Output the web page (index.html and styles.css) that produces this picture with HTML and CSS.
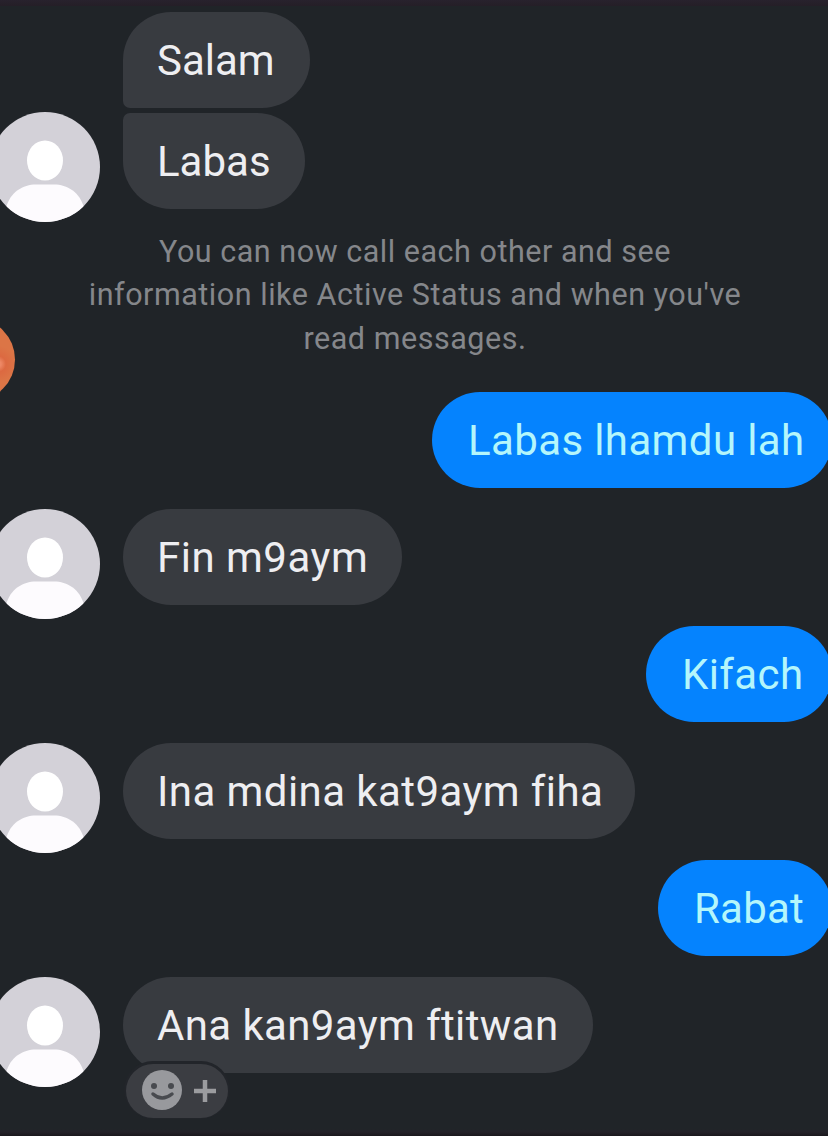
FILE: index.html
```html
<!DOCTYPE html>
<html lang="en">
<head>
<meta charset="utf-8">
<title>Chat</title>
<link rel="stylesheet" href="styles.css">
</head>
<body>
<svg class="defs" aria-hidden="true">
  <defs>
    <clipPath id="round"><circle cx="55" cy="55" r="55"/></clipPath>
    <symbol id="person" viewBox="0 0 110 110">
      <g clip-path="url(#round)">
        <rect width="110" height="110" fill="#d3d1d8"/>
        <ellipse cx="55" cy="48.5" rx="18" ry="20" fill="#fff"/>
        <path d="M16 96C20 80 33 72.500 46 72.500H64C77 72.500 90 80 94 96V110H16Z" fill="#fdfbfe"/>
      </g>
    </symbol>
  </defs>
</svg>
<main class="chat">
  <div class="head-marker"></div>
  <div class="row first"><div class="bubble group-top w-salam"><span>Salam</span></div></div>
  <div class="row labas"><svg class="avatar"><use href="#person"/></svg><div class="bubble group-end w-labas"><span>Labas</span></div></div>
  <p class="note">You can now call each other and see<br>information like Active Status and when you've<br>read messages.</p>
  <div class="row sent reply"><div class="bubble blue w-lah"><span>Labas lhamdu lah</span></div></div>
  <div class="row received"><svg class="avatar"><use href="#person"/></svg><div class="bubble w-fin"><span>Fin m9aym</span></div></div>
  <div class="row sent"><div class="bubble blue w-kifach"><span>Kifach</span></div></div>
  <div class="row received"><svg class="avatar"><use href="#person"/></svg><div class="bubble w-ina"><span>Ina mdina kat9aym fiha</span></div></div>
  <div class="row sent"><div class="bubble blue w-rabat"><span>Rabat</span></div></div>
  <div class="row received"><svg class="avatar"><use href="#person"/></svg><div class="bubble w-ana"><span>Ana kan9aym ftitwan</span>
    <svg class="reaction" viewBox="0 0 108 60">
      <rect x="1" y="1" width="106" height="58" rx="29" fill="#22252a"/>
      <rect x="3" y="4" width="102" height="54" rx="27" fill="#3b3d42"/>
      <circle cx="39" cy="30" r="20" fill="#98999d"/>
      <circle cx="31" cy="26" r="3" fill="#484a4f"/>
      <circle cx="48" cy="26" r="3" fill="#484a4f"/>
      <path d="M30 34Q39 42 49 34" fill="none" stroke="#484a4f" stroke-width="3.5" stroke-linecap="round"/>
      <path d="M71 31H93M82 20V42" stroke="#9b9c9f" stroke-width="4.5"/>
    </svg></div></div>
  <div class="floating-dot"></div>
</main>
</body>
</html>
```
FILE: styles.css
```css
* { box-sizing: border-box; }
body { margin: 0; background: #202428; }
.defs { position: absolute; width: 0; height: 0; }
.chat {
  position: relative;
  width: 828px;
  height: 1136px;
  overflow: hidden;
  font-family: Roboto, "Liberation Sans", sans-serif;
  background: linear-gradient(#202428, #202428 1129px, #242228 1132px, #1a181c);
}
.head-marker { height: 6px; background: linear-gradient(#28222d, #251f27); }
.row { display: flex; align-items: flex-start; height: 96px; margin-bottom: 21px; padding-left: 123px; }
.row.first { margin: 6px 0 5px; }
.row.labas { margin-bottom: 20px; }
.row.labas, .row.received { padding-left: 0; }
.row.sent { justify-content: flex-end; padding: 0; margin-right: -4px; }
.avatar { flex: none; width: 110px; height: 110px; margin: 0 23px 0 -10px; }
.labas .avatar { margin-top: -1px; }
.bubble {
  position: relative;
  flex: none;
  height: 96px;
  padding-left: 34px;
  border-radius: 48px;
  background: #383b40;
  color: #eeeef1;
  font-size: 42px;
  line-height: 98px;
  white-space: nowrap;
}
.group-top { border-bottom-left-radius: 7px; }
.group-end { border-top-left-radius: 7px; }
.blue { background: #0583fe; color: #b4f6fb; padding-left: 36px; }
.w-salam { width: 187px; }
.w-labas { width: 182px; }
.w-lah { width: 400px; letter-spacing: .38px; }
.w-fin { width: 279px; letter-spacing: .5px; }
.w-kifach { width: 186px; letter-spacing: .4px; }
.w-ina { width: 512px; letter-spacing: .42px; }
.w-rabat { width: 174px; letter-spacing: .2px; }
.w-ana { width: 470px; letter-spacing: .38px; }
.note {
  height: 130px;
  margin: 0 0 32px;
  padding: 1px 0 0 2px;
  color: #85878b;
  font-size: 30.5px;
  line-height: 43.4px;
  letter-spacing: .53px;
  text-align: center;
  white-space: nowrap;
}
.row.reply { margin-top: 33px; }
.reaction { position: absolute; left: 0; top: 83px; width: 108px; height: 60px; }
.floating-dot {
  position: absolute;
  left: -68px;
  top: 318px;
  width: 83px;
  height: 83px;
  border-radius: 50%;
  background: radial-gradient(circle at 66px 46px, #ed8865 0 3px, #dc6941 8px, #dc7546 18px);
}
```
